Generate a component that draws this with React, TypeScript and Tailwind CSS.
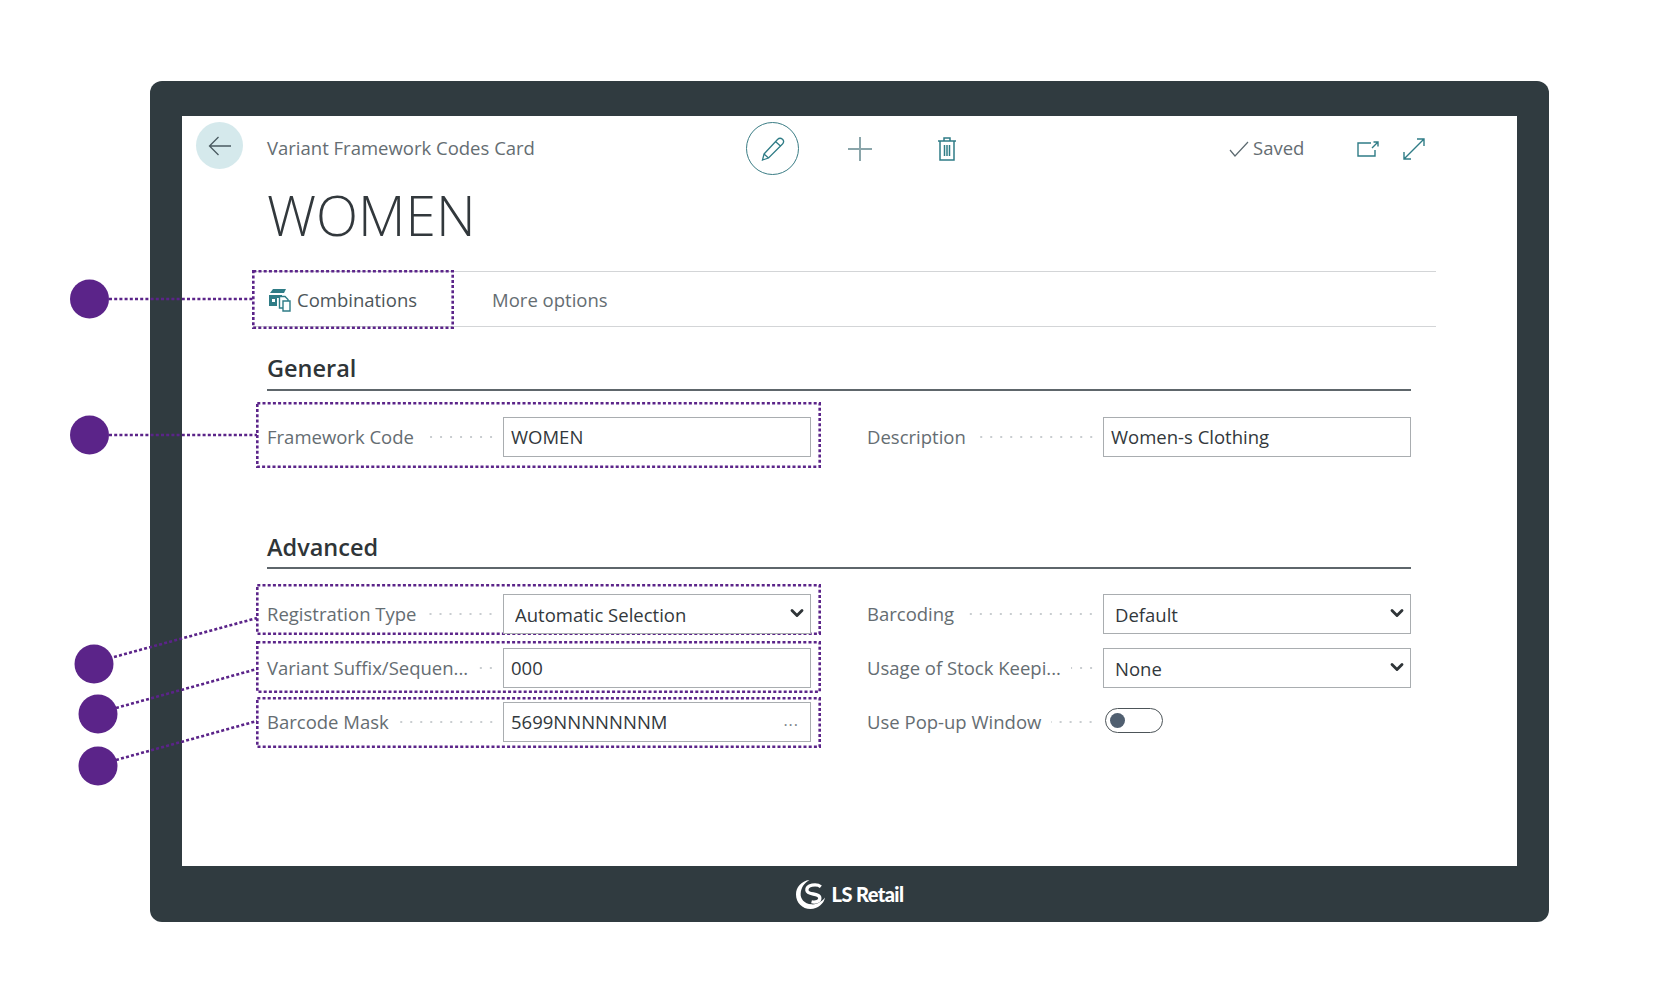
import { ChevronDown } from "lucide-react";

const Leader = () => (
  <svg className="absolute left-0 top-0" width="1680" height="984" fill="none">
    <g stroke="#5b2489" strokeWidth="2.6" strokeDasharray="3 2.2">
      <line x1="109" y1="299" x2="253" y2="299" />
      <line x1="109" y1="435" x2="257" y2="435" />
      <line x1="114" y1="657" x2="257" y2="618" />
      <line x1="116" y1="708" x2="257" y2="669" />
      <line x1="116" y1="760" x2="257" y2="721" />
    </g>
    <g fill="#5b2489">
      <circle cx="89.5" cy="299" r="19.5" />
      <circle cx="89.5" cy="435" r="19.5" />
      <circle cx="94" cy="664" r="19.5" />
      <circle cx="98" cy="714" r="19.5" />
      <circle cx="98" cy="766" r="19.5" />
    </g>
  </svg>
);

// dashed annotation frame laid over a row
const Box = ({ className }: { className: string }) => (
  <svg className={"pointer-events-none absolute " + className} fill="none">
    <rect
      x="1.3"
      y="1.3"
      className="h-[calc(100%-2.6px)] w-[calc(100%-2.6px)]"
      stroke="#5b2489"
      strokeWidth="2.6"
      strokeDasharray="3 2.2"
    />
  </svg>
);

const Dots = () => (
  <div className="ml-[10px] mr-[7px] h-1 flex-1 bg-[radial-gradient(circle,#c9cdd0_1px,transparent_1.2px)] bg-[length:10px_4px] bg-right bg-repeat-x" />
);

const Field = ({ label, children }: { label: string; children: React.ReactNode }) => (
  <div className="flex h-10 w-[544px] items-center">
    <div className="flex w-[236px] items-center">
      <span className="whitespace-nowrap text-[18.5px] text-[#656d72]">{label}</span>
      <Dots />
    </div>
    {children}
  </div>
);

const TextBox = ({ value, more }: { value: string; more?: boolean }) => (
  <div className="flex h-10 w-[308px] items-center justify-between border border-[#a9adb0] pl-[7px] pr-[11px] text-[18.5px] text-[#32383c]">
    <span>{value}</span>
    {more && <span className="mb-1 text-[16px] tracking-[1px] text-[#7c8388]">...</span>}
  </div>
);

const Select = ({ value }: { value: string }) => (
  <div className="relative h-10 w-[308px]">
    <select
      defaultValue={value}
      className="h-10 w-full appearance-none border border-[#a9adb0] bg-white pl-[11px] pt-[1px] text-[18.5px] text-[#32383c]"
    >
      <option>{value}</option>
    </select>
    <ChevronDown className="pointer-events-none absolute right-[4px] top-[9px] text-[#2f3538]" size={20} strokeWidth={3.4} />
  </div>
);

const Heading = ({ title, className }: { title: string; className: string }) => (
  <div className={"flex h-[40px] items-end border-b-2 border-[#5e666b] " + className}>
    <h2 className="text-[23.5px] font-semibold leading-[34px] text-[#2f3538]">{title}</h2>
  </div>
);

const CombinationsIcon = () => (
  <svg width="24" height="24" viewBox="0 0 24 24" fill="none">
    <path d="M2 5 L5 1 H18 L16 5 Z" fill="#2f7c86" />
    <path d="M1 7 H14 V10 H9 V18 H1 Z" fill="#2f7c86" />
    <rect x="4" y="11" width="3" height="3" fill="#fff" />
    <path d="M11.5 8.5 H17 L20 11.5 V20 H11.5 Z" fill="#fff" stroke="#2f7c86" strokeWidth="1.4" />
    <path d="M15 13 H22 V23 H15 Z" fill="#fff" stroke="#2f7c86" strokeWidth="1.4" />
  </svg>
);

const App = () => {
  return (
    <div className="relative h-[984px] w-[1680px] overflow-hidden bg-white pl-[150px] pt-[81px] font-['Open_Sans',sans-serif]">
      <div className="flex h-[841px] w-[1399px] flex-col rounded-[12px] bg-[#303b40] px-[32px] pt-[35px]">
        <div className="h-[750px] w-[1335px] bg-white pt-[6px]">
          <div className="flex h-[53px] items-center">
            <button className="ml-[14px] flex h-[47px] w-[47px] items-center justify-center self-start rounded-full bg-[#d5e9ec]">
              <svg width="24" height="20" viewBox="0 0 24 20" fill="none" stroke="#4a5a60" strokeWidth="1.3">
                <path d="M23 10 H1.5 M10.5 1 L1.5 10 L10.5 19" />
              </svg>
            </button>
            <div className="mb-[2px] ml-[24px] w-[479px] text-[18.5px] text-[#656d72]">Variant Framework Codes Card</div>
            <div className="flex h-[53px] w-[53px] items-center justify-center rounded-full border border-[#3b7d85]">
              <svg width="24" height="24" viewBox="0 0 24 24" fill="none" stroke="#2f7c86" strokeWidth="1.3">
                <path d="M3 17 L16.5 2.5 C18 1 20 1 21.5 2.3 C23 3.8 22.8 5.6 21.5 7 L7.5 21 L1.5 23 Z M14.5 4.5 L20 9.5 M3 17 L7.5 21" />
              </svg>
            </div>
            <svg className="ml-[49px]" width="24" height="24" viewBox="0 0 24 24" stroke="#8aa5aa" strokeWidth="2">
              <path d="M12 0 V24 M0 12 H24" />
            </svg>
            <svg className="ml-[66px]" width="18" height="24" viewBox="0 0 18 24" fill="none" stroke="#2f7c86" strokeWidth="1.5">
              <path d="M0 4 H18 M6 4 V1 H12 V4 M2 4 V23 H16 V4 M6.5 8 V19 M9 8 V19 M11.5 8 V19" />
            </svg>
            <svg className="ml-[273px]" width="20" height="16" viewBox="0 0 20 16" fill="none" stroke="#5c6a70" strokeWidth="1.2">
              <path d="M1 9 L6 15 L19 1" />
            </svg>
            <span className="mb-[2px] ml-[4px] w-[51px] whitespace-nowrap text-[18.5px] text-[#656d72]">Saved</span>
            <svg className="ml-[53px]" width="22" height="16" viewBox="0 0 22 16" fill="none" stroke="#2f7c86" strokeWidth="1.4">
              <path d="M14 2 H1 V15 H18 V9 M15 7 L21 1 M16.5 1 H21 V5.5" />
            </svg>
            <svg className="ml-[24px]" width="22" height="22" viewBox="0 0 22 22" fill="none" stroke="#2f7c86" strokeWidth="1.4">
              <path d="M1 21 L21 1 M14 1 H21 V8 M1 14 V21 H8" />
            </svg>
          </div>
          <h1 className="ml-[85px] mt-[4px] text-[55px] font-light leading-[72px] text-[#32383c]">WOMEN</h1>
          <div className="relative ml-[71px] mt-[20px] flex h-[56px] w-[1183px] items-center border-y border-[#d3d5d7] pl-[15px] pt-[2px] text-[18.5px]">
            <Box className="-left-[1px] -top-[2px] h-[59px] w-[202px]" />
            <CombinationsIcon />
            <span className="ml-[5px] text-[#4d5559]">Combinations</span>
            <span className="ml-[75px] text-[#656d72]">More options</span>
          </div>
          <div className="ml-[85px] mt-[24px] w-[1144px]">
            <Heading title="General" className="pb-[4px]" />
            <div className="relative mt-[26px] flex h-10 justify-between">
              <Box className="-left-[11px] -top-[15px] h-[66px] w-[565px]" />
              <Field label="Framework Code">
                <TextBox value="WOMEN" />
              </Field>
              <Field label="Description">
                <TextBox value="Women-s Clothing" />
              </Field>
            </div>
            <div className="mt-[72px]">
              <Heading title="Advanced" className="pb-[3px]" />
            </div>
            <div className="relative mt-[25px] flex h-10 justify-between">
              <Box className="-left-[11px] -top-[10px] h-[51px] w-[565px]" />
              <Field label="Registration Type">
                <Select value="Automatic Selection" />
              </Field>
              <Field label="Barcoding">
                <Select value="Default" />
              </Field>
            </div>
            <div className="relative mt-[14px] flex h-10 justify-between">
              <Box className="-left-[11px] -top-[7px] h-[52px] w-[565px]" />
              <Field label="Variant Suffix/Sequen...">
                <TextBox value="000" />
              </Field>
              <Field label="Usage of Stock Keepi...">
                <Select value="None" />
              </Field>
            </div>
            <div className="relative mt-[14px] flex h-10 justify-between">
              <Box className="-left-[11px] -top-[5px] h-[51px] w-[565px]" />
              <Field label="Barcode Mask">
                <TextBox value="5699NNNNNNNM" more />
              </Field>
              <Field label="Use Pop-up Window">
                <div className="mb-[3px] ml-[2px] flex h-[25px] w-[58px] items-center rounded-full border border-[#4d5559] pl-[4px]">
                  <div className="h-[15px] w-[15px] rounded-full bg-[#505f70]" />
                </div>
                <div className="w-[248px]" />
              </Field>
            </div>
          </div>
        </div>
        <div className="flex h-[56px] items-center justify-center gap-[7px]">
          <svg width="29" height="29" viewBox="0 0 28 28" fill="none">
            <path d="M13 0 C5 1 0 7 0 14 C0 22 6 28 14 28 C21 28 27 23 28 17 C25 21 20 24 15 23.5 C8 23 4 18 4.5 13 C5 7 8 3 13 0 Z" fill="#fff" />
            <path d="M24 6.5 C20 3.5 10 4.5 10.5 10 C11 15 23 12 23 17.5 C23 20.5 19 22 15 21" stroke="#fff" strokeWidth="3.2" />
          </svg>
          <span className="font-['Lato',sans-serif] text-[20px] font-black tracking-[-0.6px] text-white">LS Retail</span>
        </div>
      </div>
      <Leader />
    </div>
  );
};

export default App;
